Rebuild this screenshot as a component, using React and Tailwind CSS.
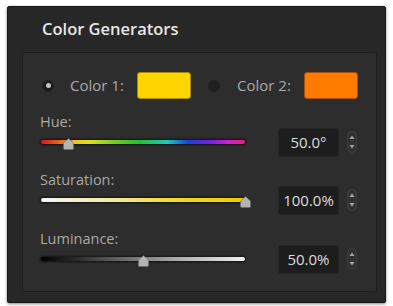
import React from "react";

function Thumb({ left }) {
  return (
    <svg
      className="absolute top-[-1px]"
      style={{ left: left - 5 }}
      width="11"
      height="12"
      viewBox="0 0 11 12"
    >
      <path d="M5.5 0.5 L10.5 5 L10.5 10.5 Q10.5 11.5 9.5 11.5 L1.5 11.5 Q0.5 11.5 0.5 10.5 L0.5 5 Z" fill="#b4b4b4" stroke="#6a6a6a" strokeWidth="0.6" />
    </svg>
  );
}

function Spinner() {
  return (
    <svg width="10" height="22" viewBox="0 0 10 22" className="shrink-0">
      <rect x="0.75" y="0.75" width="8.5" height="20.5" rx="4" fill="#2f2f2f" stroke="#4a4a4a" strokeWidth="0.8" />
      <path d="M2.5 8 L5 4.5 L7.5 8 Z" fill="#a8a8a8" />
      <path d="M2.5 14 L5 17.5 L7.5 14 Z" fill="#a8a8a8" />
      <line x1="2.5" y1="11" x2="7.5" y2="11" stroke="#3e3e3e" strokeWidth="0.8" />
    </svg>
  );
}

function SliderSection({ label, trackClass, thumb, value, className }) {
  return (
    <div className={"flex flex-col " + className}>
      <div className="h-[16px] flex items-center text-[14.5px] leading-none text-[#a9a9a9] pl-[17px]">{label}</div>
      <div className="h-[24px] flex items-center pl-[17px]">
        <div className="relative w-[206px] h-[6px]">
          <div className={"w-full h-full rounded-full border border-[#1a1a1a] shadow-[0_0_2px_rgba(0,0,0,0.8)] " + trackClass} />
          <Thumb left={thumb} />
        </div>
        <div className="ml-[32px] w-[61px] h-[29px] rounded-[3px] bg-[#1d1d1d] border border-[#242424] flex items-center justify-center text-[15px] text-[#dcdcdc]">
          {value}
        </div>
        <div className="ml-[8px]">
          <Spinner />
        </div>
      </div>
    </div>
  );
}

export default function App() {
  return (
    <div className="w-[393px] h-[306px] bg-white overflow-hidden" style={{ fontFamily: '"Open Sans", "Noto Sans", sans-serif' }}>
      <div className="ml-[7px] mt-[6px] w-[379px] h-[297px] bg-[#272727] border border-[#181818] rounded-[2px] shadow-[0_1px_3px_rgba(0,0,0,0.5)] flex flex-col">
        <div className="h-[45px] flex items-center pl-[34px] text-[16.5px] font-semibold text-[#e6e6e6]">Color Generators</div>
        <div className="ml-[14px] w-[355px] h-[240px] bg-[#2d2d2d] border border-[#1e1e1e] rounded-[2px] flex flex-col">
          <div className="mt-[19px] h-[27px] flex items-center pl-[19px]">
            <div className="w-[12px] h-[12px] rounded-full bg-[#1b1b1b] border border-[#222] flex items-center justify-center">
              <div className="w-[5px] h-[5px] rounded-full bg-[#c4c4c4]" />
            </div>
            <span className="ml-[16px] w-[55px] text-[15px] text-[#a9a9a9] whitespace-nowrap">Color 1:</span>
            <div className="ml-[12px] w-[54px] h-[27px] rounded-[3px] bg-[#ffd500] border border-[#a98a00]" />
            <div className="ml-[17px] w-[12px] h-[12px] rounded-full bg-[#1e1e1e] border border-[#232323]" />
            <span className="ml-[17px] w-[55px] text-[15px] text-[#a9a9a9] whitespace-nowrap">Color 2:</span>
            <div className="ml-[12px] w-[54px] h-[27px] rounded-[3px] bg-[#ff7b00] border border-[#a85000]" />
          </div>
          <SliderSection
            className="mt-[15px]"
            label="Hue:"
            trackClass="bg-[linear-gradient(to_right,#d81818,#e8701c_10%,#f0c020_16%,#d8e020_24%,#70d020_36%,#20c030_48%,#20c8c0_62%,#1c40e0_72%,#7020e0_82%,#d020d0_92%,#e02080)]"
            thumb={28}
            value="50.0°"
          />
          <SliderSection
            className="mt-[18px]"
            label="Saturation:"
            trackClass="bg-[linear-gradient(to_right,#f4f4f4,#f2eaa0_35%,#f0d820_70%,#f0cc00)]"
            thumb={205}
            value="100.0%"
          />
          <SliderSection
            className="mt-[19px]"
            label="Luminance:"
            trackClass="bg-[linear-gradient(to_right,#000000,#5a5a5a_35%,#a8a8a8_65%,#f0f0f0)]"
            thumb={103}
            value="50.0%"
          />
        </div>
      </div>
    </div>
  );
}
